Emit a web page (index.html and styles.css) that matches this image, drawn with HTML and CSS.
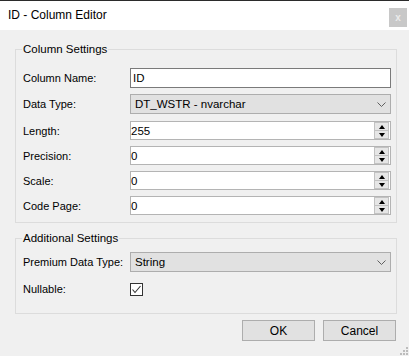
FILE: index.html
```html
<!DOCTYPE html>
<html>
<head>
<meta charset="utf-8">
<link rel="stylesheet" href="styles.css">
</head>
<body>
<div class="window">
  <div class="titlebar">
    <span class="title">ID - Column Editor</span>
    <span class="close">x</span>
  </div>
  <div class="content">
    <fieldset class="group group-column">
      <legend>Column Settings</legend>
      <div class="rows">
        <span class="label">Column Name:</span>
        <div class="textbox focused">ID</div>
        <span class="label">Data Type:</span>
        <div class="combo"><span>DT_WSTR - nvarchar</span><svg class="chev" width="9" height="5" viewBox="0 0 9 5"><polyline points="0.5,0.5 4.5,4.5 8.5,0.5" fill="none" stroke="#5f5f5f" stroke-width="1"/></svg></div>
        <span class="label lower">Length:</span>
        <div class="numeric lower"><span>255</span><div class="spin"><div class="spin-up"><i></i></div><div class="spin-down"><i></i></div></div></div>
        <span class="label">Precision:</span>
        <div class="numeric"><span>0</span><div class="spin"><div class="spin-up"><i></i></div><div class="spin-down"><i></i></div></div></div>
        <span class="label">Scale:</span>
        <div class="numeric"><span>0</span><div class="spin"><div class="spin-up"><i></i></div><div class="spin-down"><i></i></div></div></div>
        <span class="label">Code Page:</span>
        <div class="numeric"><span>0</span><div class="spin"><div class="spin-up"><i></i></div><div class="spin-down"><i></i></div></div></div>
      </div>
    </fieldset>
    <fieldset class="group group-additional">
      <legend>Additional Settings</legend>
      <div class="rows rows-additional">
        <span class="label">Premium Data Type:</span>
        <div class="combo"><span>String</span><svg class="chev" width="9" height="5" viewBox="0 0 9 5"><polyline points="0.5,0.5 4.5,4.5 8.5,0.5" fill="none" stroke="#5f5f5f" stroke-width="1"/></svg></div>
        <span class="label">Nullable:</span>
        <div class="checkcell"><div class="checkbox"><svg width="11" height="11" viewBox="0 0 11 11"><polyline points="1.5,5.5 4,8.5 9.5,2" fill="none" stroke="#333" stroke-width="1.1"/></svg></div></div>
      </div>
    </fieldset>
    <div class="buttons">
      <div class="btn">OK</div>
      <div class="btn">Cancel</div>
    </div>
  </div>
  <svg class="grip" width="8" height="8" viewBox="0 0 8 8">
    <rect x="6" y="0" width="2" height="2" fill="#bcbcbc"/>
    <rect x="3" y="3" width="2" height="2" fill="#bcbcbc"/>
    <rect x="6" y="3" width="2" height="2" fill="#bcbcbc"/>
    <rect x="0" y="6" width="2" height="2" fill="#bcbcbc"/>
    <rect x="3" y="6" width="2" height="2" fill="#bcbcbc"/>
    <rect x="6" y="6" width="2" height="2" fill="#bcbcbc"/>
  </svg>
</div>
</body>
</html>
```
FILE: styles.css
```css
* { box-sizing: border-box; }
html, body { margin: 0; padding: 0; }
body {
  width: 409px;
  height: 356px;
  overflow: hidden;
  font-family: "Liberation Sans", Arial, sans-serif;
  font-size: 11px;
  color: #000;
  background: #f0f0f0;
}
.window {
  position: relative;
  width: 409px;
  height: 356px;
  background: #f0f0f0;
}
.titlebar {
  height: 30px;
  background: #fff;
  border-top: 1px solid #2b2b2b;
  display: flex;
  align-items: center;
  justify-content: space-between;
  padding: 0 2px 0 8px;
}
.title {
  font-size: 12px;
  margin-top: -1px;
}
.close {
  width: 18px;
  height: 19px;
  background: #c8c8c8;
  color: #ebebeb;
  font-size: 10px;
  font-weight: bold;
  display: flex;
  align-items: center;
  justify-content: center;
  margin-top: 4px;
}
.content {
  padding: 12px 12px 0 15px;
  display: flex;
  flex-direction: column;
}
.group {
  margin: 0;
  border: 1px solid #dcdcdc;
  padding: 12px 5px 0 7px;
  min-width: 0;
}
.group legend {
  padding: 0 1px;
  margin-left: -1px;
  line-height: 14px;
  height: 14px;
  font-size: 11.5px;
}
.group-column { padding-bottom: 7px; }
.group-additional {
  margin-top: 8px;
  height: 83px;
  padding-top: 7px;
}
.rows {
  display: grid;
  grid-template-columns: 107px 261px;
  row-gap: 6px;
  align-items: center;
}
.rows-additional { row-gap: 10px; }
.label { line-height: 14px; white-space: nowrap; font-size: 11px; }
.lower { margin-top: 1px; }
.textbox, .combo, .numeric {
  height: 20px;
  display: flex;
  align-items: center;
  font-size: 11.5px;
}
.textbox {
  background: #fff;
  border: 1px solid #7a7a7a;
  padding-left: 2px;
}
.combo {
  background: #e1e1e1;
  border: 1px solid #adadad;
  padding: 0 4px 0 4px;
  justify-content: space-between;
}
.chev { margin-right: 0; margin-top: 1px; }
.numeric {
  background: #fff;
  border: 1px solid #b4b4b4;
  padding-left: 0;
  padding-right: 1px;
  justify-content: space-between;
  height: 19px;
}
.spin {
  width: 15px;
  height: 17px;
  display: flex;
  flex-direction: column;
}
.spin-up, .spin-down {
  flex: 1;
  background: #e6e6e6;
  border: 1px solid #c2c2c2;
  display: flex;
  align-items: center;
  justify-content: center;
}
.spin-down { border-top: none; }
.spin-up i {
  width: 0; height: 0;
  border-left: 3px solid transparent;
  border-right: 3px solid transparent;
  border-bottom: 4px solid #000;
}
.spin-down i {
  width: 0; height: 0;
  border-left: 3px solid transparent;
  border-right: 3px solid transparent;
  border-top: 4px solid #000;
}
.checkcell { height: 14px; display: flex; align-items: center; }
.checkbox {
  width: 13px;
  height: 13px;
  background: #fff;
  border: 1px solid #333;
  display: flex;
  align-items: center;
  justify-content: center;
}
.checkbox svg { display: block; }
.buttons {
  display: flex;
  justify-content: flex-end;
  gap: 8px;
  margin-top: 6px;
  padding-right: 1px;
}
.btn {
  width: 73px;
  height: 21px;
  background: #e1e1e1;
  border: 1px solid #adadad;
  display: flex;
  align-items: center;
  justify-content: center;
  font-size: 12px;
}
.grip {
  position: absolute;
  right: 1px;
  bottom: 1px;
}
```
